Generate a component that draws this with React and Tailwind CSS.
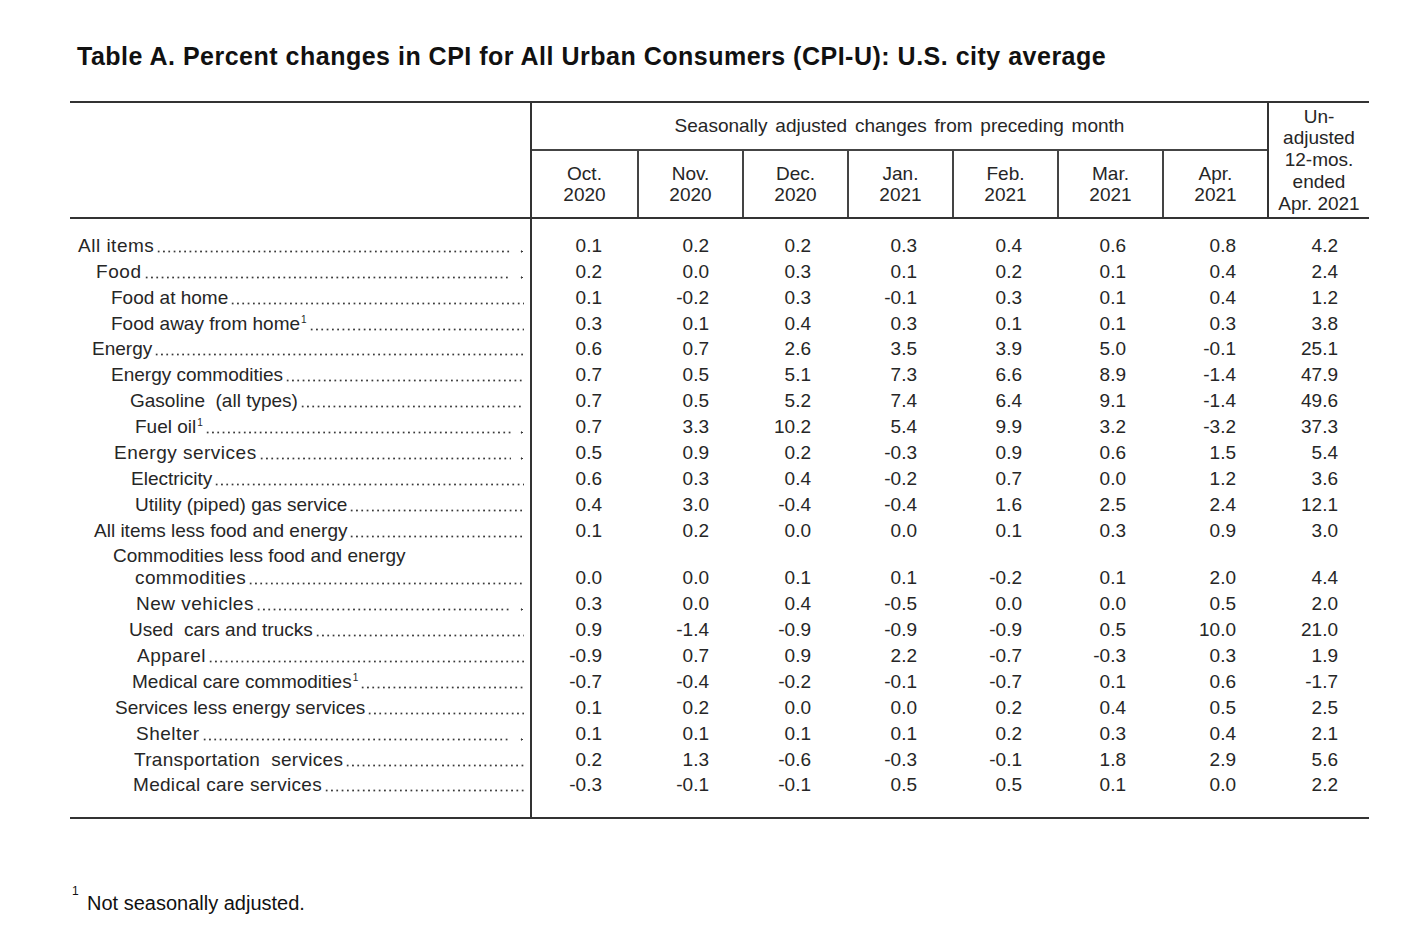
import React from "react";

const months = [
  ["Oct.", "2020"],
  ["Nov.", "2020"],
  ["Dec.", "2020"],
  ["Jan.", "2021"],
  ["Feb.", "2021"],
  ["Mar.", "2021"],
  ["Apr.", "2021"],
];

const pr = [
  "pr-[35px]",
  "pr-[33px]",
  "pr-[36px]",
  "pr-[35px]",
  "pr-[35px]",
  "pr-[36px]",
  "pr-[31px]",
  "pr-[31px]",
];

const rows = [
  { l: "All items", x: "pl-[8px]", t: "tracking-[0.5px]", gap: true, v: ["0.1", "0.2", "0.2", "0.3", "0.4", "0.6", "0.8", "4.2"] },
  { l: "Food", x: "pl-[26px]", t: "tracking-[0.6px]", gap: true, v: ["0.2", "0.0", "0.3", "0.1", "0.2", "0.1", "0.4", "2.4"] },
  { l: "Food at home", x: "pl-[41px]", v: ["0.1", "-0.2", "0.3", "-0.1", "0.3", "0.1", "0.4", "1.2"] },
  { l: "Food away from home", sup: true, x: "pl-[41px]", v: ["0.3", "0.1", "0.4", "0.3", "0.1", "0.1", "0.3", "3.8"] },
  { l: "Energy", x: "pl-[22px]", v: ["0.6", "0.7", "2.6", "3.5", "3.9", "5.0", "-0.1", "25.1"] },
  { l: "Energy commodities", x: "pl-[41px]", v: ["0.7", "0.5", "5.1", "7.3", "6.6", "8.9", "-1.4", "47.9"] },
  { l: "Gasoline  (all types)", x: "pl-[60px]", v: ["0.7", "0.5", "5.2", "7.4", "6.4", "9.1", "-1.4", "49.6"] },
  { l: "Fuel oil", sup: true, x: "pl-[65px]", gap: true, v: ["0.7", "3.3", "10.2", "5.4", "9.9", "3.2", "-3.2", "37.3"] },
  { l: "Energy services", x: "pl-[44px]", t: "tracking-[0.5px]", gap: true, v: ["0.5", "0.9", "0.2", "-0.3", "0.9", "0.6", "1.5", "5.4"] },
  { l: "Electricity", x: "pl-[61px]", v: ["0.6", "0.3", "0.4", "-0.2", "0.7", "0.0", "1.2", "3.6"] },
  { l: "Utility (piped) gas service", x: "pl-[65px]", v: ["0.4", "3.0", "-0.4", "-0.4", "1.6", "2.5", "2.4", "12.1"] },
  { l: "All items less food and energy", x: "pl-[24px]", v: ["0.1", "0.2", "0.0", "0.0", "0.1", "0.3", "0.9", "3.0"] },
  { l: "Commodities less food and energy", l2: "commodities", x: "pl-[43px]", x2: "pl-[22px]", v: ["0.0", "0.0", "0.1", "0.1", "-0.2", "0.1", "2.0", "4.4"] },
  { l: "New vehicles", x: "pl-[66px]", t: "tracking-[0.5px]", gap: true, v: ["0.3", "0.0", "0.4", "-0.5", "0.0", "0.0", "0.5", "2.0"] },
  { l: "Used  cars and trucks", x: "pl-[59px]", v: ["0.9", "-1.4", "-0.9", "-0.9", "-0.9", "0.5", "10.0", "21.0"] },
  { l: "Apparel", x: "pl-[67px]", t: "tracking-[0.5px]", v: ["-0.9", "0.7", "0.9", "2.2", "-0.7", "-0.3", "0.3", "1.9"] },
  { l: "Medical care commodities", sup: true, x: "pl-[62px]", v: ["-0.7", "-0.4", "-0.2", "-0.1", "-0.7", "0.1", "0.6", "-1.7"] },
  { l: "Services less energy services", x: "pl-[45px]", v: ["0.1", "0.2", "0.0", "0.0", "0.2", "0.4", "0.5", "2.5"] },
  { l: "Shelter", x: "pl-[66px]", t: "tracking-[0.5px]", gap: true, v: ["0.1", "0.1", "0.1", "0.1", "0.2", "0.3", "0.4", "2.1"] },
  { l: "Transportation  services", x: "pl-[64px]", t: "tracking-[0.3px]", v: ["0.2", "1.3", "-0.6", "-0.3", "-0.1", "1.8", "2.9", "5.6"] },
  { l: "Medical care services", x: "pl-[63px]", t: "tracking-[0.3px]", v: ["-0.3", "-0.1", "-0.1", "0.5", "0.5", "0.1", "0.0", "2.2"] },
];

function Leader({ gap }) {
  return (
    <>
      <span className="flex-1 min-w-0 h-[22px] ml-[2px] bg-[radial-gradient(circle,#3a3a3a_0.9px,transparent_1.2px)] bg-[length:5.3px_3px] bg-[position:0_15px] bg-repeat-x" />
      {gap && (
        <span className="w-[5.3px] h-[22px] ml-[8px] bg-[radial-gradient(circle,#3a3a3a_0.9px,transparent_1.2px)] bg-[length:5.3px_3px] bg-[position:0_15px] bg-repeat-x" />
      )}
    </>
  );
}

function Label({ r }) {
  if (r.l2) {
    return (
      <div className={`flex flex-col ${r.x}`}>
        <div className="whitespace-pre">{r.l}</div>
        <div className={`flex ${r.x2}`}>
          <span className="whitespace-pre tracking-[0.4px]">{r.l2}</span>
          <Leader gap={r.gap} />
        </div>
      </div>
    );
  }
  return (
    <div className={`flex ${r.x}`}>
      <span className={`whitespace-pre ${r.t || ""}`}>
        {r.l}
        {r.sup && <sup className="text-[10px] relative -top-[7px] pl-[1px]">1</sup>}
      </span>
      <Leader gap={r.gap} />
    </div>
  );
}

export default function App() {
  return (
    <div
      className="w-[1425px] h-[935px] bg-white text-[#262626] overflow-hidden"
      style={{ fontFamily: '"Liberation Sans", Arial, sans-serif' }}
    >
      <h1 className="pt-[42px] pl-[77px] text-[25px] leading-[28px] tracking-[0.5px] font-bold text-[#111] whitespace-nowrap">
        Table A. Percent changes in CPI for All Urban Consumers (CPI-U): U.S. city average
      </h1>

      <div className="ml-[70px] mt-[31px] w-[1299px] border-t-2 border-b-2 border-[#333] text-[19px]">
        {/* Header */}
        <div className="flex h-[116px] border-b-2 border-[#333]">
          <div className="w-[462px] border-r-2 border-[#333]" />
          <div className="w-[735px] flex flex-col">
            <div className="h-[48px] border-b-2 border-[#444] flex items-center justify-center [word-spacing:2.5px]">
              Seasonally adjusted changes from preceding month
            </div>
            <div className="flex-1 grid grid-cols-7">
              {months.map((m, i) => (
                <div
                  key={i}
                  className={`flex flex-col items-center justify-center leading-[21px] ${
                    i > 0 ? "border-l-2 border-[#444]" : ""
                  }`}
                >
                  <div>{m[0]}</div>
                  <div>{m[1]}</div>
                </div>
              ))}
            </div>
          </div>
          <div className="w-[102px] border-l-2 border-[#333] flex flex-col items-center justify-center leading-[21.8px]">
            <div>Un-</div>
            <div>adjusted</div>
            <div>12-mos.</div>
            <div>ended</div>
            <div>Apr. 2021</div>
          </div>
        </div>

        {/* Body */}
        <div className="grid grid-cols-[462px_repeat(7,105px)_102px]">
          <div className="h-[14px] border-r-2 border-[#333]" />
          <div className="col-span-8" />
          {rows.map((r, ri) => (
            <React.Fragment key={ri}>
              <div className="border-r-2 border-[#333] pr-[6px] py-[1.95px] leading-[22px]">
                <Label r={r} />
              </div>
              {r.v.map((val, ci) => (
                <div
                  key={ci}
                  className={`flex items-end justify-end py-[1.95px] leading-[22px] ${pr[ci]}`}
                >
                  {val}
                </div>
              ))}
            </React.Fragment>
          ))}
          <div className="h-[19px] border-r-2 border-[#333]" />
          <div className="col-span-8" />
        </div>
      </div>

      <div className="mt-[72px] ml-[72px] flex items-start text-[20px] leading-[24px] text-[#111]">
        <span className="text-[12px] leading-[12px] mt-[-6px] w-[15px]">1</span>
        <span>Not seasonally adjusted.</span>
      </div>
    </div>
  );
}
